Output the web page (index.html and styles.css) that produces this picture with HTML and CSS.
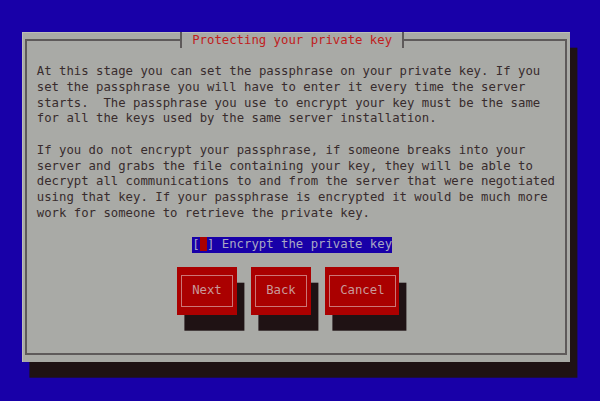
FILE: index.html
```html
<!DOCTYPE html>
<html lang="en">
<head>
    <meta charset="UTF-8">
    <meta name="viewport" content="width=device-width, initial-scale=1.0">
    <title>Protecting your private key</title>
    <link rel="stylesheet" href="styles.css">
</head>
<body>
    <div class="screen">
        <div class="dialog">
            <!-- Title sits on the top line of the frame -->
            <div class="titlebar">
                <span class="rule rule-left"></span>
                <span class="tick"></span>
                <h1 class="title">Protecting your private key</h1>
                <span class="tick"></span>
                <span class="rule rule-right"></span>
            </div>

            <div class="frame">
                <p class="msg">At this stage you can set the passphrase on your private key. If you<br>
                    set the passphrase you will have to enter it every time the server<br>
                    starts.&nbsp; The passphrase you use to encrypt your key must be the same<br>
                    for all the keys used by the same server installation.</p>

                <p class="msg">If you do not encrypt your passphrase, if someone breaks into your<br>
                    server and grabs the file containing your key, they will be able to<br>
                    decrypt all communications to and from the server that were negotiated<br>
                    using that key. If your passphrase is encrypted it would be much more<br>
                    work for someone to retrieve the private key.</p>

                <div class="check-row">
                    <span class="checkbox">[<span class="cursor">&nbsp;</span>] Encrypt the private key</span>
                </div>

                <div class="buttons">
                    <button class="btn"><span>Next</span></button>
                    <button class="btn"><span>Back</span></button>
                    <button class="btn btn-wide"><span>Cancel</span></button>
                </div>
            </div>
        </div>
    </div>
</body>
</html>
```

FILE: styles.css
```css
/* Global Reset */
* {
    margin: 0;
    padding: 0;
    box-sizing: border-box;
}

/* one terminal cell */
:root {
    --cw: 7.4px;
    --ch: 15.7px;
    --line: #5e5a5a;
}

body {
    height: 100vh;
    overflow: hidden;
    background-color: #1800a8;
    font-family: "DejaVu Sans Mono", monospace;
    font-size: 12.3px;
    line-height: var(--ch);
    color: #382c2d;
}

.screen {
    padding: 32px 0 0 22px;
}

/* Dialog window */
.dialog {
    display: flex;
    flex-direction: column;
    width: calc(var(--cw) * 74);
    height: calc(var(--ch) * 21);
    padding: 0 calc(var(--cw) / 2 - 1px) calc(var(--ch) / 2 - 1px);
    background-color: #a9aaa6;
    box-shadow: inset 1px 1px 0 #bcbdb9, var(--cw) var(--ch) 0 #1f1214;
}

.titlebar {
    display: flex;
    align-items: flex-end;
    height: var(--ch);
}

.rule {
    height: calc(var(--ch) / 2 + 1px);
    border-top: 2px solid var(--line);
}

.rule-left {
    width: calc(var(--cw) * 21);
    border-left: 2px solid var(--line);
}

.rule-right {
    flex: 1;
    border-right: 2px solid var(--line);
}

.tick {
    align-self: stretch;
    width: 2px;
    background-color: var(--line);
}

.title {
    padding: 1px calc(var(--cw) * 1.5 - 1px) 0;
    font-size: inherit;
    font-weight: normal;
    color: #c02020;
    align-self: center;
}

.frame {
    flex: 1;
    padding: calc(var(--ch) + 1px) 0 0 calc(var(--cw) * 1.5 - 1px);
    border: 2px solid var(--line);
    border-top: none;
}

.msg {
    margin-bottom: var(--ch);
    white-space: nowrap;
}

/* Checkbox line */
.check-row {
    height: var(--ch);
    margin: 0 0 calc(var(--ch) - 1px) calc(var(--cw) * 21);
}

.checkbox {
    display: inline-block;
    background-color: #1800a8;
    color: #a8a8c4;
    white-space: pre;
}

.cursor {
    background-color: #aa0000;
}

/* Buttons */
.buttons {
    display: flex;
    gap: calc(var(--cw) * 2);
    margin-left: calc(var(--cw) * 19);
}

.btn {
    width: calc(var(--cw) * 8);
    height: calc(var(--ch) * 3);
    padding: calc(var(--ch) / 2 - 0.5px) calc(var(--cw) / 2 - 0.5px);
    border: none;
    background-color: #aa0000;
    box-shadow: var(--cw) var(--ch) 0 #1f1214;
    font: inherit;
    color: #c99a9a;
}

.btn-wide {
    width: calc(var(--cw) * 10);
}

.btn span {
    display: flex;
    align-items: center;
    justify-content: center;
    height: 100%;
    border: 1px solid #cc7676;
}
```
